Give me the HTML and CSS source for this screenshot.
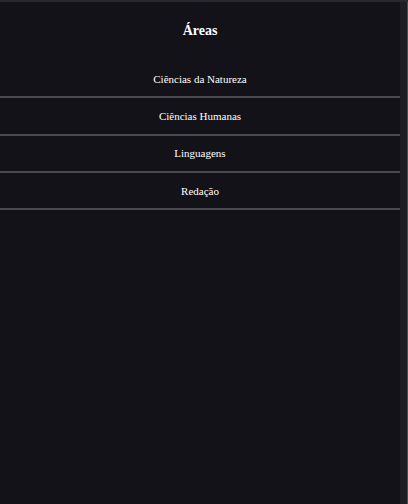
FILE: index.html
```html
<!DOCTYPE html>
<html lang="pt">
<head>
<meta charset="utf-8">
<link rel="stylesheet" href="styles.css">
</head>
<body>
<div class="frame">
  <aside class="panel">
    <h2 class="title">Áreas</h2>
    <ul class="list">
      <li class="item">Ciências da Natureza</li>
      <li class="item">Ciências Humanas</li>
      <li class="item">Linguagens</li>
      <li class="item">Redação</li>
    </ul>
  </aside>
  <div class="gutter"></div>
</div>
</body>
</html>
```
FILE: styles.css
```css
html, body {
  margin: 0;
  padding: 0;
  background: #1f1f23;
}
body {
  width: 408px;
  height: 504px;
  overflow: hidden;
  border-top: 2px solid #29292d;
  box-sizing: border-box;
  font-family: "Liberation Serif", "Times New Roman", serif;
  color: #ffffff;
}
.frame {
  display: flex;
  height: 502px;
}
.panel {
  width: 400px;
  background: #131218;
  height: 100%;
}
.gutter {
  flex: 1;
  background: #1f1f23;
  border-right: 1px solid #4a4f56;
}
.title {
  margin: 0;
  height: 59px;
  padding-bottom: 1px;
  box-sizing: border-box;
  display: flex;
  align-items: center;
  justify-content: center;
  font-size: 14px;
  font-weight: bold;
}
.list {
  list-style: none;
  margin: 0;
  padding: 0;
}
.item {
  height: 35.33px;
  display: flex;
  align-items: center;
  justify-content: center;
  font-size: 11px;
  border-bottom: 2px solid #4a4a50;
}
```
